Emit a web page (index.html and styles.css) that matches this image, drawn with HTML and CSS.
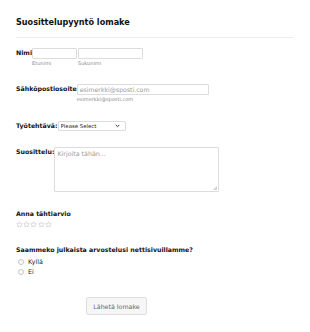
FILE: index.html
```html
<!DOCTYPE html>
<html lang="fi">
<head>
    <meta charset="UTF-8">
    <meta name="viewport" content="width=device-width, initial-scale=1.0">
    <title>Suosittelupyyntö lomake</title>
    <link rel="stylesheet" href="styles.css">
</head>
<body>
    <form class="form">
        <h1 class="form-title">Suosittelupyyntö lomake</h1>

        <div class="row row-name">
            <label class="label">Nimi</label>
            <div class="name-inputs">
                <span class="sub-field">
                    <input class="input input-first" type="text">
                    <small class="sub-label">Etunimi</small>
                </span>
                <span class="sub-field">
                    <input class="input input-last" type="text">
                    <small class="sub-label">Sukunimi</small>
                </span>
            </div>
        </div>

        <div class="row row-email">
            <label class="label">Sähköpostiosoite</label>
            <span class="sub-field">
                <input class="input input-email" type="email" placeholder="esimerkki@sposti.com">
                <small class="sub-label">esimerkki@sposti.com</small>
            </span>
        </div>

        <div class="row row-job">
            <label class="label">Työtehtävä:</label>
            <span class="select-wrap">
                <select class="select">
                    <option>Please Select</option>
                </select>
                <svg class="select-arrow" width="5" height="4" viewBox="0 0 5 4">
                    <path d="M0.7 0.9 L2.5 2.7 L4.3 0.9" fill="none" stroke="#333" stroke-width="1"/>
                </svg>
            </span>
        </div>

        <div class="row row-text">
            <label class="label">Suosittelu:</label>
            <span class="textarea-wrap">
                <textarea class="textarea" placeholder="Kirjoita tähän..."></textarea>
                <svg class="grip" width="4" height="4" viewBox="0 0 4 4">
                    <path d="M4 0 L4 4 L0 4 Z" fill="#d2d2d2"/>
                </svg>
            </span>
        </div>

        <div class="block block-rating">
            <div class="label">Anna tähtiarvio</div>
            <div class="stars">
                <svg width="7" height="7" viewBox="0 0 24 24"><path d="M12 2.5l2.9 6.1 6.6.8-4.9 4.6 1.3 6.6L12 17.3l-5.9 3.3 1.3-6.6-4.9-4.6 6.6-.8z" fill="none" stroke="#c4c4c4" stroke-width="2"/></svg>
                <svg width="7" height="7" viewBox="0 0 24 24"><path d="M12 2.5l2.9 6.1 6.6.8-4.9 4.6 1.3 6.6L12 17.3l-5.9 3.3 1.3-6.6-4.9-4.6 6.6-.8z" fill="none" stroke="#c4c4c4" stroke-width="2"/></svg>
                <svg width="7" height="7" viewBox="0 0 24 24"><path d="M12 2.5l2.9 6.1 6.6.8-4.9 4.6 1.3 6.6L12 17.3l-5.9 3.3 1.3-6.6-4.9-4.6 6.6-.8z" fill="none" stroke="#c4c4c4" stroke-width="2"/></svg>
                <svg width="7" height="7" viewBox="0 0 24 24"><path d="M12 2.5l2.9 6.1 6.6.8-4.9 4.6 1.3 6.6L12 17.3l-5.9 3.3 1.3-6.6-4.9-4.6 6.6-.8z" fill="none" stroke="#c4c4c4" stroke-width="2"/></svg>
                <svg width="7" height="7" viewBox="0 0 24 24"><path d="M12 2.5l2.9 6.1 6.6.8-4.9 4.6 1.3 6.6L12 17.3l-5.9 3.3 1.3-6.6-4.9-4.6 6.6-.8z" fill="none" stroke="#c4c4c4" stroke-width="2"/></svg>
            </div>
        </div>

        <div class="block block-publish">
            <div class="label">Saammeko julkaista arvostelusi nettisivuillamme?</div>
            <div class="radios">
                <label class="radio"><span class="radio-dot"></span>Kyllä</label>
                <label class="radio"><span class="radio-dot"></span>Ei</label>
            </div>
        </div>

        <div class="actions">
            <button class="submit" type="button">Lähetä lomake</button>
        </div>
    </form>
</body>
</html>
```

FILE: styles.css
```css
body {
    margin: 0;
    background: #fff;
    color: #2c3345;
    font-family: "DejaVu Sans", Verdana, sans-serif;
    font-size: 6.3px;
}
.form {
    padding: 16px 17px 0 16px;
}
.form-title {
    margin: 0;
    padding: 1px 0 9px;
    border-bottom: 1px solid #ececec;
    font-size: 8.1px;
    line-height: 11px;
    font-weight: bold;
    color: #111;
}
.row {
    display: flex;
    align-items: flex-start;
}
.label {
    font-size: 6.25px;
    line-height: 9px;
    font-weight: bold;
    color: #111;
}
.row-name {
    margin-top: 10px;
}
.name-inputs {
    display: flex;
    gap: 1px;
}
.sub-field {
    display: flex;
    flex-direction: column;
}
.input {
    box-sizing: border-box;
    height: 11px;
    margin: 0;
    padding: 0 2px;
    border: 1px solid #dcdcdc;
    border-radius: 1px;
    font-family: inherit;
    font-size: 6.2px;
    outline: none;
}
.input::placeholder, .textarea::placeholder {
    color: #9a9a9a;
}
.input-first {
    width: 45px;
}
.input-last {
    width: 65px;
}
.input-email {
    width: 132px;
}
.sub-label {
    margin-top: 1px;
    font-size: 5px;
    line-height: 7px;
    color: #8a8a8a;
}
.row-email {
    margin-top: 17px;
}
.row-job {
    margin-top: 18px;
}
.select-wrap {
    position: relative;
    display: flex;
}
.select {
    appearance: none;
    box-sizing: border-box;
    width: 68px;
    height: 10px;
    margin: 0;
    padding: 0 2px;
    border: 1px solid #dcdcdc;
    border-radius: 1px;
    background: #fff;
    color: #222;
    font-family: inherit;
    font-size: 5.4px;
}
.select-arrow {
    position: absolute;
    right: 6px;
    top: 3px;
}
.row-text {
    margin-top: 16px;
}
.textarea-wrap {
    position: relative;
    display: flex;
}
.textarea {
    box-sizing: border-box;
    width: 165px;
    height: 45px;
    margin: 0;
    padding: 2px;
    border: 1px solid #dcdcdc;
    border-radius: 1px;
    font-family: inherit;
    font-size: 6.3px;
    outline: none;
    resize: none;
}
.grip {
    position: absolute;
    right: 2px;
    bottom: 2px;
}
.block-rating {
    margin-top: 17px;
}
.stars {
    display: flex;
    gap: 0.2px;
    margin-top: 3px;
    height: 8px;
}
.block-publish {
    margin-top: 16px;
}
.radios {
    margin-top: 3px;
}
.radio {
    display: flex;
    align-items: center;
    gap: 4px;
    margin-left: 2px;
    font-size: 6.3px;
    line-height: 10px;
    color: #222;
}
.radio-dot {
    box-sizing: border-box;
    width: 6px;
    height: 6px;
    border: 1px solid #c4c4c4;
    border-radius: 50%;
}
.actions {
    margin-top: 20px;
    padding-left: 70px;
}
.submit {
    box-sizing: border-box;
    width: 61px;
    height: 18px;
    padding: 0;
    border: 1px solid #dedede;
    border-radius: 2px;
    background: #f6f6f6;
    color: #666;
    font-family: inherit;
    font-size: 6.3px;
}
```
